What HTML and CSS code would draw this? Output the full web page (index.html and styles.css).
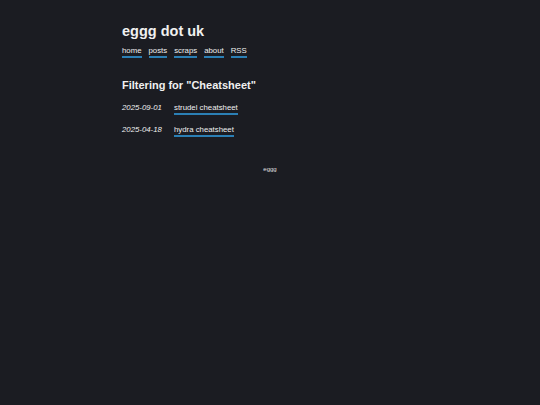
FILE: index.html
```html
<!DOCTYPE html>
<html>
<head>
<meta charset="utf-8">
<link rel="stylesheet" href="styles.css">
</head>
<body>
<div class="wrap">
  <header class="site">
    <h1 class="title">eggg dot uk</h1>
    <nav class="nav">
      <a href="#">home</a>
      <a href="#">posts</a>
      <a href="#">scraps</a>
      <a href="#">about</a>
      <a href="#">RSS</a>
    </nav>
  </header>
  <main>
    <h2 class="heading">Filtering for "Cheatsheet"</h2>
    <ul class="posts">
      <li><span class="date">2025-09-01</span><a href="#">strudel cheatsheet</a></li>
      <li><span class="date">2025-04-18</span><a href="#">hydra cheatsheet</a></li>
    </ul>
  </main>
  <footer class="foot">eggg</footer>
</div>
</body>
</html>
```
FILE: styles.css
```css
html, body {
  margin: 0;
  padding: 0;
  background: #1b1c22;
  color: #f0f0f0;
  font-family: "Liberation Sans", Arial, sans-serif;
}
.wrap {
  width: 296px;
  margin: 0 auto;
  padding-top: 22px;
}
a {
  color: #f0f0f0;
  text-decoration: none;
  border-bottom: 2px solid #2b7fb5;
}
.title {
  font-size: 14.5px;
  font-weight: bold;
  margin: 0;
  line-height: 18px;
}
.nav {
  display: flex;
  gap: 7px;
  font-size: 7.8px;
  margin-top: 6px;
  line-height: 10px;
}
.heading {
  font-size: 11px;
  font-weight: bold;
  margin: 20px 0 0;
  line-height: 14px;
}
.posts {
  list-style: none;
  margin: 11px 0 0;
  padding: 0;
  font-size: 7.8px;
  display: flex;
  flex-direction: column;
  gap: 10px;
}
.posts li {
  display: flex;
  line-height: 10px;
}
.date {
  font-style: italic;
  width: 52px;
}
.foot {
  text-align: center;
  font-size: 6px;
  color: #e0e0e0;
  margin-top: 29px;
}
```
